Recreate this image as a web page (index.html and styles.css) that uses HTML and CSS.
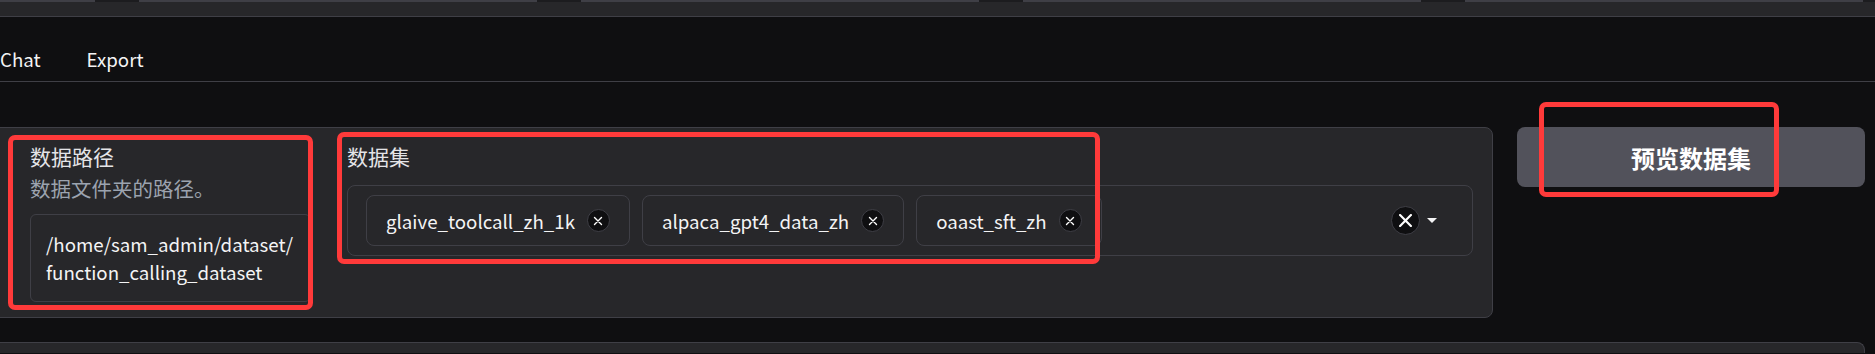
FILE: index.html
```html
<!DOCTYPE html>
<html lang="zh">
<head>
<meta charset="utf-8">
<title>Dataset</title>
<link rel="stylesheet" href="styles.css">
</head>
<body>
<div class="topbar">
  <div class="topfields">
    <div class="topfield"></div>
    <div class="topfield"></div>
    <div class="topfield"></div>
    <div class="topfield"></div>
    <div class="topfield"></div>
  </div>
</div>
<nav class="tabs">
  <button class="tab">Chat</button>
  <button class="tab">Export</button>
</nav>
<div class="page">
  <div class="row">
    <div class="panel">
      <div class="field path">
        <div class="label">数据路径</div>
        <div class="info">数据文件夹的路径。</div>
        <div class="textarea">/home/sam_admin/dataset/<br>function_calling_dataset</div>
      </div>
      <div class="field datasets">
        <div class="label">数据集</div>
        <div class="dropdown">
          <div class="chips">
            <span class="chip"><span class="chip-text">glaive_toolcall_zh_1k</span><span class="chip-x"><svg viewBox="0 0 10 10" width="10" height="10"><path d="M1.5 1.5L8.5 8.5M8.5 1.5L1.5 8.5" stroke="#fff" stroke-width="1.4" stroke-linecap="round"/></svg></span></span>
            <span class="chip"><span class="chip-text">alpaca_gpt4_data_zh</span><span class="chip-x"><svg viewBox="0 0 10 10" width="10" height="10"><path d="M1.5 1.5L8.5 8.5M8.5 1.5L1.5 8.5" stroke="#fff" stroke-width="1.4" stroke-linecap="round"/></svg></span></span>
            <span class="chip"><span class="chip-text">oaast_sft_zh</span><span class="chip-x"><svg viewBox="0 0 10 10" width="10" height="10"><path d="M1.5 1.5L8.5 8.5M8.5 1.5L1.5 8.5" stroke="#fff" stroke-width="1.4" stroke-linecap="round"/></svg></span></span>
          </div>
          <div class="dd-icons">
            <span class="clear"><svg viewBox="0 0 12 12" width="13" height="13"><path d="M1 1L11 11M11 1L1 11" stroke="#fff" stroke-width="2" stroke-linecap="round"/></svg></span>
            <span class="caret"></span>
          </div>
        </div>
      </div>
    </div>
    <div class="side">
      <button class="btn">预览数据集</button>
    </div>
  </div>
  <div class="next-block"></div>
</div>
<div class="mark mark-path"></div>
<div class="mark mark-datasets"></div>
<div class="mark mark-btn"></div>
</body>
</html>
```

FILE: styles.css
```css
* { box-sizing: border-box; }
html, body {
  margin: 0;
  padding: 0;
  width: 1875px;
  height: 354px;
  overflow: hidden;
  background: #0f0f11;
  color: #e4e4e7;
  font-family: "Noto Sans CJK SC", "Noto Sans", sans-serif;
}
body { position: relative; }

.topbar {
  height: 17px;
  background: #27272a;
  border-bottom: 1px solid #3f3f46;
  overflow: hidden;
}
.topfields {
  display: flex;
  gap: 44px;
  margin-left: -303px;
  height: 2px;
  background: #1c1c1f;
}
.topfield {
  flex: 0 0 398px;
  height: 2px;
  background: #3f3f46;
}

.tabs {
  display: flex;
  margin-left: -23px;
  height: 65px;
  border-bottom: 1px solid #3f3f46;
}
.tab {
  background: none;
  border: none;
  color: #f4f4f5;
  font-family: inherit;
  font-size: 18.7px;
  line-height: 30px;
  padding: 20px 23px 0;
  height: 64px;
  text-align: left;
  vertical-align: top;
}

.page {
  margin: 45px 10px 0 -25px;
}
.row {
  display: flex;
  gap: 24px;
  align-items: flex-start;
}
.panel {
  flex: 1;
  display: flex;
  gap: 36px;
  background: #27272a;
  border: 1px solid #3f3f46;
  border-radius: 8px;
  padding: 13px 19px 15px 54px;
}
.field { min-width: 0; }
.field.path { flex: 0 0 281px; width: 281px; }
.field.datasets { flex: 1 1 auto; }
.label {
  font-size: 21px;
  line-height: 30px;
  color: #e4e4e7;
}
.info {
  margin-top: 2px;
  font-size: 20.5px;
  line-height: 30px;
  color: #9ca3af;
}
.textarea {
  margin-top: 11px;
  border: 1px solid #3f3f46;
  border-radius: 6px;
  padding: 15px 15px;
  font-size: 18.7px;
  line-height: 28px;
  color: #f4f4f5;
  white-space: nowrap;
  overflow: hidden;
}

.dropdown {
  margin-top: 14px;
  border: 1px solid #3f3f46;
  border-radius: 8px;
  padding: 9px 35px 9px 18px;
  display: flex;
  align-items: center;
}
.chips {
  flex: 1;
  display: flex;
  gap: 12px;
}
.chip {
  flex: 0 0 auto;
  display: flex;
  align-items: center;
  height: 51px;
  border: 1px solid #3f3f46;
  border-radius: 8px;
  padding: 0 19px 0 19px;
  gap: 12px;
  font-size: 18.7px;
  color: #f4f4f5;
}
.chip-x {
  flex: 0 0 23px;
  width: 23px;
  height: 23px;
  border-radius: 50%;
  background: #0f0f11;
  border: 1px solid #3f3f46;
  display: flex;
  align-items: center;
  justify-content: center;
}
.chip-x svg { display: block; }
.dd-icons {
  flex: 0 0 auto;
  display: flex;
  align-items: center;
  gap: 7px;
}
.clear {
  flex: 0 0 29px;
  width: 29px;
  height: 29px;
  border-radius: 50%;
  background: #0f0f11;
  border: 1px solid #3f3f46;
  display: flex;
  align-items: center;
  justify-content: center;
}
.clear svg { display: block; }
.caret {
  width: 0;
  height: 0;
  border-left: 5px solid transparent;
  border-right: 5px solid transparent;
  border-top: 5px solid #f4f4f5;
}

.side { flex: 0 0 348px; }
.btn {
  display: block;
  width: 100%;
  height: 60px;
  border: none;
  border-radius: 8px;
  background: #52525b;
  color: #ffffff;
  font-family: inherit;
  font-size: 24px;
  font-weight: 700;
}

.next-block {
  margin-top: 24px;
  height: 11px;
  background: #27272a;
  border: 1px solid #3f3f46;
  border-bottom: none;
  border-radius: 8px 8px 0 0;
}

.mark {
  position: absolute;
  border: 5px solid #ff3a3a;
  border-radius: 7px;
  pointer-events: none;
}
.mark-path { left: 8px; top: 135px; width: 305px; height: 175px; }
.mark-datasets { left: 337px; top: 132px; width: 763px; height: 132px; }
.mark-btn { left: 1539px; top: 102px; width: 240px; height: 95px; }
```
